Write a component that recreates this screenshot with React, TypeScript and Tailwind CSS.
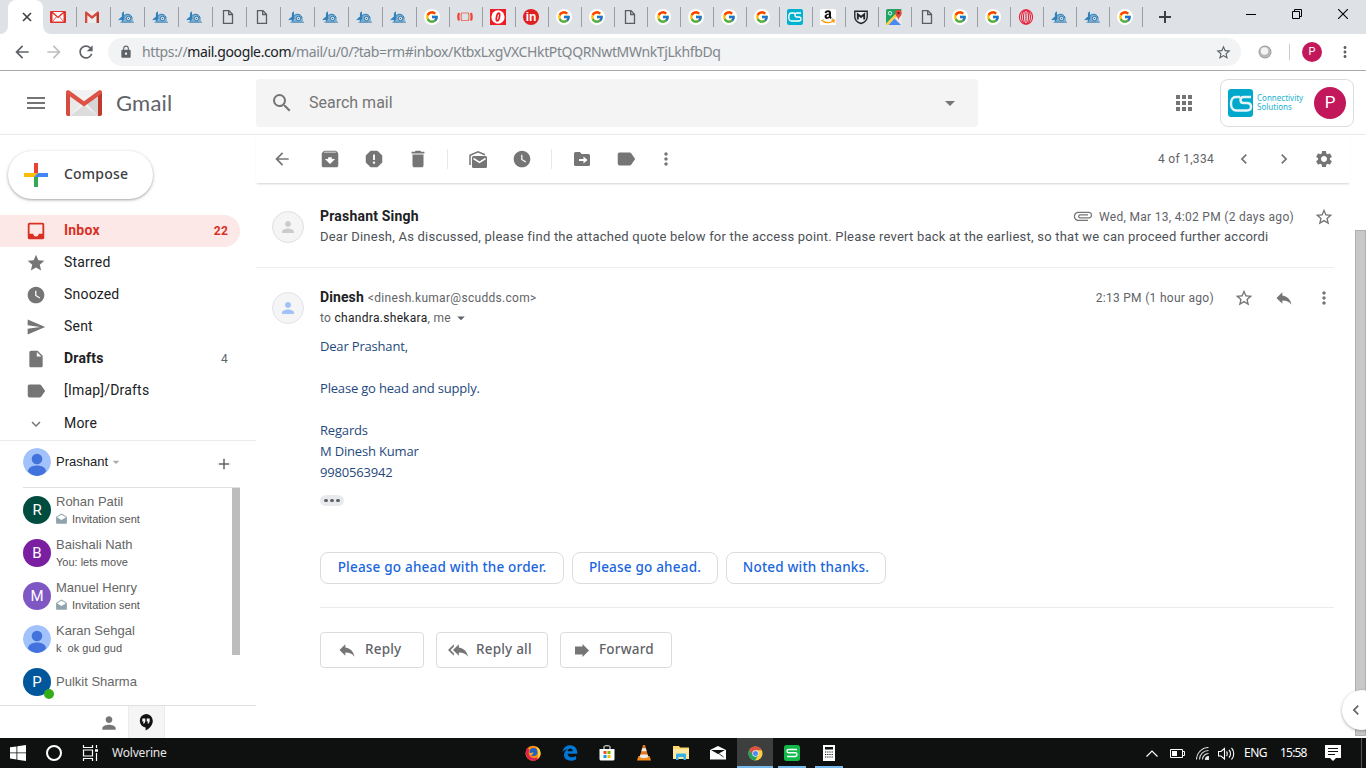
import type { ReactNode } from 'react';
import {
  MdAdd,
  MdApps,
  MdArchive,
  MdArrowBack,
  MdArrowDropDown,
  MdArrowForward,
  MdAttachFile,
  MdChevronLeft,
  MdChevronRight,
  MdDelete,
  MdDrafts,
  MdExpandMore,
  MdInbox,
  MdInsertDriveFile,
  MdLabel,
  MdLock,
  MdMenu,
  MdMoreVert,
  MdPerson,
  MdRefresh,
  MdReply,
  MdReplyAll,
  MdReport,
  MdSearch,
  MdSend,
  MdSettings,
  MdStar,
  MdStarBorder,
  MdWatchLater,
} from 'react-icons/md';
import { FcGoogle } from 'react-icons/fc';
import { FaAmazon } from 'react-icons/fa';

type TabKind =
  | 'gmailOld' | 'gmail' | 'dolphin' | 'file' | 'google' | 'frame' | 'opera'
  | 'in' | 'cs' | 'amazon' | 'shield' | 'maps' | 'rings';

const wideTabs: TabKind[] = [
  'gmailOld', 'gmail', 'dolphin', 'dolphin', 'dolphin', 'file', 'file',
  'dolphin', 'dolphin', 'dolphin', 'dolphin',
];

const narrowTabs: TabKind[] = [
  'google', 'frame', 'opera', 'in', 'google', 'google', 'file', 'google', 'google', 'google', 'google',
  'cs', 'amazon', 'shield', 'maps', 'file', 'google', 'google', 'rings', 'dolphin', 'dolphin', 'google',
];

function Favicon({ kind }: { kind: TabKind }) {
  switch (kind) {
    case 'gmailOld':
      return (
        <svg width="16" height="16" viewBox="0 0 16 16">
          <rect x="0" y="2" width="16" height="12" rx="1" fill="#e0322d" />
          <path d="M2.500 4.500v8h11v-8L8 9.200z" fill="#fff" />
          <path d="M3 3h10L8 7.400z" fill="#fff" />
          <path d="M2.500 12.500L6.300 8M13.500 12.500L9.700 8" stroke="#e0322d" strokeWidth="0.800" />
        </svg>
      );
    case 'gmail':
      return (
        <svg width="16" height="16" viewBox="0 0 16 16">
          <rect x="1" y="2" width="14" height="12" rx="1" fill="#ececec" />
          <path d="M1 3v11h2.300V6.300L8 10l4.700-3.700V14H15V3l-1.300-.7L8 6.900 2.300 2.300z" fill="#d54b3d" />
          <path d="M12.700 6.300V14H15V3.500z" fill="#b93a2c" />
        </svg>
      );
    case 'dolphin':
      return (
        <svg width="16" height="16" viewBox="0 0 16 16">
          <path d="M0.200 11.300C1.500 9.500 2.800 8.600 4 7.600L3.900 4 6 2.300 5.900 5.600 8 7 6.500 11l-2.200 2.200L3.500 10.800z" fill="#2f7fbb" />
          <path d="M6 6.200C9 3.700 13.600 5 14.300 9l.9 3.300-3.600 1.200H4.500L6.400 9z" fill="#7fb0d2" />
          <path d="M6.300 6.500C9.500 4 13.500 5.500 14.200 9.400" stroke="#2f7fbb" strokeWidth="1" fill="none" />
          <circle cx="10.500" cy="9.500" r="2.200" fill="#d6e6f0" stroke="#3577a8" strokeWidth="1" />
          <circle cx="10.500" cy="9.500" r="0.700" fill="#2d6e9e" />
          <path d="M2.500 13.200H16" stroke="#4a89b5" strokeWidth="1" />
        </svg>
      );
    case 'file':
      return (
        <svg width="16" height="16" viewBox="0 0 16 16" fill="none" stroke="#5a5d61" strokeWidth="1.300">
          <path d="M3.500 1.600h5.400l3.600 3.700v9.100h-9z" />
          <path d="M8.700 1.800v3.700h3.600" />
        </svg>
      );
    case 'google':
      return (
        <div className="flex h-4 w-4 items-center justify-center rounded-full bg-white">
          <FcGoogle size={14} className="shrink-0" />
        </div>
      );
    case 'frame':
      return (
        <svg width="16" height="16" viewBox="0 0 16 16" fill="none" stroke="#f0402f">
          <path d="M4 4h8M4 11.500h8" stroke="#f2705f" strokeWidth="0.900" />
          <path d="M4.500 4.300c-.5 2-.5 5 0 7M11.500 4.300c.5 2 .5 5 0 7" strokeWidth="0.800" />
          <path d="M2 4c-.7 2-.7 5.500 0 7.500M14 4c.7 2 .7 5.500 0 7.500" strokeWidth="2.200" />
        </svg>
      );
    case 'opera':
      return (
        <svg width="16" height="16" viewBox="0 0 16 16">
          <rect width="16" height="16" fill="#ee1c25" />
          <ellipse cx="8" cy="8" rx="6.600" ry="6.800" fill="#fff" />
          <ellipse cx="8" cy="8" rx="2.300" ry="4.800" fill="#ee1c25" transform="rotate(12 8 8)" />
          <path d="M8.500 5.600l-1 4.800" stroke="#fff" strokeWidth="1" />
        </svg>
      );
    case 'in':
      return (
        <div className="flex h-4 w-4 items-center justify-center rounded-full bg-[#e02020] pb-px font-['Liberation_Sans',sans-serif] text-[12px] leading-none font-bold text-white">
          in
        </div>
      );
    case 'cs':
      return (
        <svg width="16" height="16" viewBox="0 0 16 16">
          <rect width="16" height="16" rx="2" fill="#00b2cf" />
          <path d="M7.800 4H4.500Q1.800 4 1.800 8t2.700 4H12q2 0 2-2t-2-2h-2q-2 0-2-2t2-2h4" fill="none" stroke="#fff" strokeWidth="1.300" />
        </svg>
      );
    case 'amazon':
      return (
        <svg width="16" height="16" viewBox="0 0 16 16">
          <rect width="16" height="16" rx="2" fill="#fff" />
          <FaAmazon x={1.500} y={0.500} size={13} color="#111" />
          <path d="M0 10.500h16V16H0z" fill="#fff" />
          <path d="M1.500 11c3.500 3.400 8.500 3.400 11.800 1M11.600 11.400l2.700-.2-.6 2.500" fill="none" stroke="#ff9900" strokeWidth="1.300" />
        </svg>
      );
    case 'shield':
      return (
        <svg width="16" height="16" viewBox="0 0 16 16">
          <path d="M1.800 2.300h12.400v5.400c0 3.600-2.800 5.700-6.200 6.800-3.400-1.100-6.200-3.200-6.200-6.800z" fill="#e9ebee" stroke="#20262b" strokeWidth="1.400" />
          <path d="M4.800 10.500V5.300L8 8l3.200-2.700v5.200" fill="none" stroke="#20262b" strokeWidth="1.900" />
        </svg>
      );
    case 'maps':
      return (
        <svg width="16" height="16" viewBox="0 0 16 16">
          <rect width="16" height="16" rx="1.500" fill="#1fa463" />
          <path d="M0 16L16 1v15z" fill="#e9e9e9" />
          <path d="M0 14.500L13 1.500l2 2L2.500 16H0z" fill="#ffd04b" />
          <path d="M2.500 16L8.500 9.500 15 16z" fill="#4a89f3" />
          <circle cx="4" cy="4.300" r="1.700" fill="none" stroke="#fff" strokeWidth="0.900" />
          <path d="M12.500 11c-.5-3-3.200-4-3.200-7a3.200 3.200 0 016.400 0c0 3-2.700 4-3.200 7z" fill="#dd4b3e" />
          <circle cx="12.500" cy="4" r="1.200" fill="#7d1f16" />
        </svg>
      );
    case 'rings':
      return (
        <svg width="16" height="16" viewBox="0 0 16 16" fill="none" stroke="#e8203a" strokeWidth="1.100">
          <ellipse cx="8" cy="8" rx="6.600" ry="7.200" />
          <ellipse cx="8" cy="8" rx="4.500" ry="7" />
          <ellipse cx="8" cy="8" rx="2.500" ry="6.600" />
          <path d="M8 3v10" />
        </svg>
      );
  }
}

function TabStrip() {
  return (
    <div className="flex h-[34px] bg-[#dee1e6]">
      <div className="h-[34px] w-2 shrink-0 bg-white">
        <div className="h-full w-full rounded-br-lg bg-[#dee1e6]" />
      </div>
      <div className="flex h-[34px] w-[35px] shrink-0 items-center justify-center rounded-t-lg bg-white pl-0.5">
        <svg width="10" height="10" viewBox="0 0 10 10" stroke="#3c4043" strokeWidth="1.600">
          <path d="M1 1l8 8M9 1L1 9" />
        </svg>
      </div>
      <div className="flex h-[34px] w-[34px] shrink-0 bg-white">
        <div className="flex h-full w-full items-center rounded-bl-lg bg-[#dee1e6]">
          <div className="flex h-5 w-full items-center border-r border-[#9b9fa4] pl-[7px]">
            <Favicon kind={wideTabs[0]} />
          </div>
        </div>
      </div>
      {wideTabs.slice(1).map((kind, i) => (
        <div key={i} className="mt-[7px] flex h-5 w-[34px] shrink-0 items-center border-r border-[#9b9fa4] pl-[7px]">
          <Favicon kind={kind} />
        </div>
      ))}
      {narrowTabs.map((kind, i) => (
        <div key={i} className="mt-[7px] flex h-5 w-[33px] shrink-0 items-center border-r border-[#9b9fa4] pl-[7px]">
          <Favicon kind={kind} />
        </div>
      ))}
      <svg className="mt-[11px] ml-4" width="12" height="12" viewBox="0 0 12 12" stroke="#3c4043" strokeWidth="2">
        <path d="M6 0v12M0 6h12" />
      </svg>
      <div className="mt-[9px] ml-auto flex gap-9 pr-[18px]">
        <svg width="10" height="10" viewBox="0 0 10 10" stroke="#000">
          <path d="M0 5.500h10" />
        </svg>
        <svg width="10" height="10" viewBox="0 0 10 10" stroke="#000" fill="none">
          <path d="M.5 2.500h7v7h-7zM2.500 2.500v-2h7v7h-2" />
        </svg>
        <svg width="10" height="10" viewBox="0 0 10 10" stroke="#000" strokeWidth="1.100">
          <path d="M0 0l10 10M10 0L0 10" />
        </svg>
      </div>
    </div>
  );
}

function AddressBar() {
  return (
    <div className="flex h-[37px] items-center border-b border-[#a9a9a9] bg-white text-[#5f6368]">
      <div className="flex w-[108px] items-center gap-3 pl-3">
        <MdArrowBack size={20} />
        <MdArrowForward size={20} className="text-[#bdbfc1]" />
        <MdRefresh size={20} />
      </div>
      <div className="flex h-7 w-[1133px] items-center rounded-full bg-[#f1f3f4] pl-[11px]">
        <MdLock size={14} />
        <div className="ml-[9px] font-['Noto_Sans',sans-serif] text-[14px] leading-5 tracking-[-0.38px] whitespace-nowrap text-[#80868b]">
          https://<span className="text-[#202124]">mail.google.com</span>
          /mail/u/0/?tab=rm#inbox/KtbxLxgVXCHktPtQQRNwtMWnkTjLkhfbDq
        </div>
        <MdStarBorder size={17} className="mr-[9px] ml-auto" />
      </div>
      <svg width="14" height="14" viewBox="0 0 14 14" className="ml-[17px]">
        <circle cx="7" cy="7" r="6.500" fill="#9e9e9e" />
        <circle cx="7" cy="7" r="5.600" fill="#b9b9b9" />
        <circle cx="6.500" cy="6" r="3.800" fill="#f4f4f4" />
      </svg>
      <div className="ml-[17px] h-4 w-px bg-[#c8cacd]" />
      <div className="ml-3 flex h-5 w-5 items-center justify-center rounded-full bg-[#c2185b] font-['Roboto',sans-serif] text-[11px] text-white">
        P
      </div>
      <MdMoreVert size={18} className="ml-[14px]" />
    </div>
  );
}

function GmailLogo() {
  return (
    <svg width="36" height="26" viewBox="0 0 36 26">
      <rect x="1" width="34" height="26" rx="1.500" fill="#f2f2f2" />
      <path d="M4 26l14-11 14 11z" fill="#dcdcdc" />
      <path d="M4 4v22L16 13z" fill="#e9e9e9" />
      <path d="M20 13l12 13V5z" fill="#d5d5d5" />
      <path d="M0 2v22a2 2 0 002 2h2V4z" fill="#d54b3d" />
      <path d="M36 2v22a2 2 0 01-2 2h-2V4z" fill="#c0392b" />
      <path d="M0 2.200C0 .2 2.200-.3 3.500.7L18 11.300 32.500.7C33.800-.3 36 .2 36 2.200c0 1-.4 1.500-1 2L18 16.500 1 4.200c-.6-.5-1-1-1-2z" fill="#de5145" />
    </svg>
  );
}

function Header() {
  return (
    <header className="flex h-16 items-center border-b border-[#ebebeb] text-[#757575]">
      <div className="flex w-64 items-center pl-6">
        <MdMenu size={24} />
        <div className="ml-[18px]">
          <GmailLogo />
        </div>
        <span className="ml-[14px] font-['Lato',sans-serif] text-[22px] leading-7 tracking-[0.2px] text-[#5f6368]">Gmail</span>
      </div>
      <div className="flex h-12 w-[722px] items-center rounded bg-[#f4f4f4] pl-[14px]">
        <MdSearch size={24} />
        <span className="ml-[15px] pt-px font-['Roboto',sans-serif] text-[16px]">Search mail</span>
        <MdArrowDropDown size={24} className="mr-4 ml-auto" />
      </div>
      <MdApps size={24} className="ml-[194px]" />
      <div className="ml-6 flex h-12 w-[134px] items-center rounded-lg border border-[#dadce0] pl-[7px]">
        <svg width="25" height="28" viewBox="0 0 25 28">
          <rect width="25" height="28" rx="3" fill="#00a9cb" />
          <path d="M12 8H8Q3 8 3 14.500T8 21.500h11q4 0 4-3.700T19 14h-3.500q-3 0-3-3t3-3H23" fill="none" stroke="#e4f3f7" strokeWidth="2.400" />
        </svg>
        <div className="-mt-0.5 ml-1 w-[53px] font-['Noto_Sans',sans-serif] text-[8px] text-[#22b3d1]">
          <div className="leading-[9px]">Connectivity</div>
          <div className="leading-[9px]">Solutions</div>
        </div>
        <div className="ml-1 flex h-8 w-8 shrink-0 items-center justify-center rounded-full bg-[#c2185b] font-['Roboto',sans-serif] text-[17px] text-white">
          P
        </div>
      </div>
    </header>
  );
}

interface NavItem {
  label: string;
  icon: ReactNode;
  count?: string;
  bold?: boolean;
  active?: boolean;
}

const navItems: NavItem[] = [
  { label: 'Inbox', icon: <MdInbox size={22} />, count: '22', bold: true, active: true },
  { label: 'Starred', icon: <MdStar size={20} /> },
  { label: 'Snoozed', icon: <MdWatchLater size={20} /> },
  { label: 'Sent', icon: <MdSend size={20} /> },
  { label: 'Drafts', icon: <MdInsertDriveFile size={20} />, count: '4', bold: true },
  { label: '[Imap]/Drafts', icon: <MdLabel size={22} /> },
  { label: 'More', icon: <MdExpandMore size={18} /> },
];

interface Contact {
  name: string;
  status?: string;
  invited?: boolean;
  initial?: string;
  color?: string;
  online?: boolean;
}

const contacts: Contact[] = [
  { name: 'Rohan Patil', status: 'Invitation sent', invited: true, initial: 'R', color: 'bg-[#004d40]' },
  { name: 'Baishali Nath', status: 'You: lets move', initial: 'B', color: 'bg-[#7b1fa2]' },
  { name: 'Manuel Henry', status: 'Invitation sent', invited: true, initial: 'M', color: 'bg-[#7e57c2]' },
  { name: 'Karan Sehgal', status: 'k  ok gud gud' },
  { name: 'Pulkit Sharma', initial: 'P', color: 'bg-[#01579b]', online: true },
];

function BlankAvatar() {
  return (
    <svg width="28" height="28" viewBox="0 0 28 28" className="shrink-0 rounded-full">
      <circle cx="14" cy="14" r="14" fill="#a1c2fa" />
      <circle cx="14" cy="11" r="5.300" fill="#4272db" />
      <path d="M5 23.500c0-4 4.500-6 9-6s9 2 9 6c-2 2.700-5.500 4.500-9 4.500s-7-1.800-9-4.500z" fill="#4272db" />
    </svg>
  );
}

function Sidebar() {
  return (
    <aside className="flex w-64 shrink-0 flex-col pt-4 font-['Roboto',sans-serif]">
      <button className="ml-2 flex h-12 w-[145px] items-center rounded-full bg-white pl-4 shadow-[0_1px_2px_0_rgba(60,64,67,0.3),0_1px_3px_1px_rgba(60,64,67,0.15)]">
        <svg width="24" height="24" viewBox="0 0 24 24">
          <path d="M10 0h4v10l-4 4z" fill="#ea4335" />
          <path d="M0 10h10l4 0-4 4H0z" fill="#fbbc04" />
          <path d="M14 10h10v4H10z" fill="#4285f4" />
          <path d="M10 14h4v10h-4z" fill="#34a853" />
        </svg>
        <span className="ml-4 pb-[3px] font-['Noto_Sans',sans-serif] text-[14px] font-medium tracking-[0.2px] text-[#3c4043]">Compose</span>
      </button>
      <nav className="mt-4 h-[226px] border-b border-[#ebebeb]">
        {navItems.map((item) => (
          <div
            key={item.label}
            className={`flex h-8 w-60 items-center rounded-r-full pr-3 ${item.active ? 'bg-[#fce8e6] text-[#d93025]' : 'text-[#202124]'} ${item.label === 'More' ? 'pt-0.5' : ''}`}
          >
            <div className={`ml-6 flex w-6 justify-center ${item.active ? '' : 'text-[#757575]'}`}>{item.icon}</div>
            <span className={`ml-4 pb-0.5 text-[14px] tracking-[0.2px] ${item.bold ? 'font-bold' : ''}`}>{item.label}</span>
            {item.count && (
              <span className={`ml-auto text-[12px] tracking-[0.2px] ${item.active ? 'font-bold' : 'text-[#5f6368]'}`}>{item.count}</span>
            )}
          </div>
        ))}
      </nav>

      <div className="ml-[23px] flex h-[47px] w-[217px] border-b border-[#e0e0e0] pt-[7px] font-['Liberation_Sans',sans-serif]">
        <BlankAvatar />
        <span className="mt-1.5 ml-[5px] text-[13px] leading-4 text-[#202124]">Prashant</span>
        <MdArrowDropDown size={16} className="mt-1.5 text-[#aaa]" />
        <MdAdd size={18} className="mt-[7px] mr-[7px] ml-auto text-[#666]" />
      </div>
      <div className="ml-[23px] flex h-[217px] w-[217px] justify-between font-['Liberation_Sans',sans-serif]">
        <div className="pt-2">
          {contacts.map((c) => (
            <div key={c.name} className="relative flex h-[43px]">
              {c.initial ? (
                <div className={`flex h-7 w-7 shrink-0 items-center justify-center rounded-full font-['Roboto',sans-serif] text-[15px] text-white ${c.color}`}>
                  {c.initial}
                </div>
              ) : (
                <BlankAvatar />
              )}
              {c.online && <div className="absolute top-[21px] left-[21px] h-2.5 w-2.5 rounded-full bg-[#35ac19]" />}
              <div className={`ml-[5px] whitespace-pre ${c.status ? '-mt-[3px]' : 'mt-[5px]'}`}>
                <div className="text-[13px] leading-[18px] text-[#666]">{c.name}</div>
                {c.status && (
                  <div className="flex items-center text-[11px] leading-[17px] text-[#555]">
                    {c.invited && <MdDrafts size={13} className="mr-[4px] -ml-px text-[#90a4ae]" />}
                    {c.status}
                  </div>
                )}
              </div>
            </div>
          ))}
        </div>
        <div className="h-[167px] w-2 bg-[#bdbdbd]" />
      </div>
      <div className="flex h-[33px] border-t border-[#e0e0e0]">
        <div className="ml-[90px] flex w-[38px] items-center justify-center pt-0.5 text-[#757575]">
          <MdPerson size={20} />
        </div>
        <div className="flex w-[37px] items-center justify-center border-x border-[#ebebeb] bg-[#f5f5f5] pr-px">
          <svg width="14" height="17" viewBox="0 0 14 17">
            <path d="M7 0a6.800 6.800 0 00-.4 13.500V16.500C10 15 13.800 11.500 13.800 6.800A6.800 6.800 0 007 0z" fill="#111" />
            <path d="M3.300 4.500h3v3L5.300 9.500H4l.7-2H3.300zM7.700 4.500h3v3l-1 2H8.400l.7-2H7.700z" fill="#f5f5f5" />
          </svg>
        </div>
      </div>
    </aside>
  );
}

function MailStackIcon() {
  return (
    <svg width="18" height="17" viewBox="0 0 18 17">
      <path d="M1 14V4.200L9 .9l7 2.900" fill="none" stroke="#757575" strokeWidth="1.500" />
      <rect x="3" y="5" width="15" height="12" rx="1.500" fill="#757575" />
      <path d="M4.500 7.500l6 3.800 6-3.800" fill="none" stroke="#fff" strokeWidth="1.500" />
    </svg>
  );
}

function MoveIcon() {
  return (
    <svg width="16" height="14" viewBox="0 0 16 14">
      <path d="M1.500 0H6l1.500 2h7A1.500 1.500 0 0116 3.500v9a1.500 1.500 0 01-1.500 1.500h-13A1.500 1.500 0 010 12.500v-11A1.500 1.500 0 011.500 0z" fill="#757575" />
      <path d="M5 7h4.500V4.500L13.500 8l-4 3.500V9H5z" fill="#fff" />
    </svg>
  );
}

function Toolbar() {
  return (
    <div className="flex h-12 w-[1094px] items-center text-[#757575] shadow-[0_2px_2px_-1px_rgba(0,0,0,0.18)]">
      <div className="ml-4 flex w-5 justify-center"><MdArrowBack size={20} /></div>
      <div className="ml-4 flex w-11 justify-center"><MdArchive size={22} /></div>
      <div className="flex w-11 justify-center"><MdReport size={22} /></div>
      <div className="flex w-11 justify-center"><MdDelete size={22} /></div>
      <div className="ml-[7px] h-5 w-px bg-[#e8e8e8]" />
      <div className="ml-2 flex w-11 justify-center"><MailStackIcon /></div>
      <div className="flex w-11 justify-center"><MdWatchLater size={20} /></div>
      <div className="ml-[7px] h-5 w-px bg-[#e8e8e8]" />
      <div className="ml-2 flex w-11 justify-center"><MoveIcon /></div>
      <div className="flex w-11 justify-center"><MdLabel size={22} /></div>
      <div className="flex w-9 justify-center"><MdMoreVert size={20} /></div>
      <span className="mr-[10px] ml-auto text-[12px] tracking-[0.3px] text-[#5f6368]">4 of 1,334</span>
      <div className="flex w-10 justify-center"><MdChevronLeft size={20} /></div>
      <div className="flex w-10 justify-center"><MdChevronRight size={20} /></div>
      <div className="mr-1.5 flex w-10 justify-center"><MdSettings size={20} /></div>
    </div>
  );
}

const bodyLines = ['Dear Prashant,', '', 'Please go head and supply.', '', 'Regards', 'M Dinesh Kumar', '9980563942'];

function MailView() {
  return (
    <main className="flex flex-1 flex-col font-['Roboto',sans-serif]">
      <Toolbar />
      <section className="mr-[21px] flex h-[85px] border-b border-[#eceff1] pt-7 pl-4">
        <div className="flex h-8 w-8 items-center justify-center rounded-full border border-[#e0e0e0] bg-[#f5f5f5] text-[#ccc]">
          <MdPerson size={18} />
        </div>
        <div className="-mt-1 ml-4 flex-1">
          <div className="flex h-5 items-center">
            <span className="pb-0.5 text-[14px] font-bold tracking-[0.2px] text-[#202124]">Prashant Singh</span>
            <MdAttachFile size={20} className="mr-1.5 mb-0.5 ml-auto rotate-90 text-[#757575]" />
            <span className="mr-[10px] text-[12px] tracking-[0.3px] text-[#5f6368]">Wed, Mar 13, 4:02 PM (2 days ago)</span>
            <MdStarBorder size={20} className="ml-[10px] text-[#757575]" />
          </div>
          <div className="text-[13px] leading-5 tracking-[0.222px] whitespace-nowrap text-[#4d5156]">
            Dear Dinesh, As discussed, please find the attached quote below for the access point. Please revert back at the earliest, so that we can proceed further accordi
          </div>
        </div>
      </section>

      <section className="mr-[21px] flex pt-6 pl-4">
        <div className="flex h-8 w-8 items-center justify-center rounded-full border border-[#dfe3ec] bg-[#f5f5f5] text-[#a1c2fa]">
          <MdPerson size={18} />
        </div>
        <div className="-mt-1 ml-4 flex-1">
          <div className="flex h-5 items-center">
            <span className="pb-0.5 text-[14px] font-bold tracking-[0.1px] text-[#202124]">Dinesh</span>
            <span className="ml-1 text-[12px] tracking-[0.3px] text-[#5f6368]">&lt;dinesh.kumar@scudds.com&gt;</span>
            <span className="mr-[20px] ml-auto text-[12px] tracking-[0.3px] text-[#5f6368]">2:13 PM (1 hour ago)</span>
            <MdStarBorder size={20} className="mr-5 text-[#757575]" />
            <MdReply size={20} className="mr-5 text-[#757575]" />
            <MdMoreVert size={20} className="text-[#757575]" />
          </div>
          <div className="flex h-5 items-center text-[12px] tracking-[0.3px] text-[#5f6368]">
            to&nbsp;<span className="text-[#202124]">chandra.shekara</span>, me
            <MdArrowDropDown size={18} className="ml-px" />
          </div>
          <div className="mt-2 font-['Open_Sans',sans-serif] text-[13px] tracking-[-0.18px] text-[#1f497d]">
            {bodyLines.map((line, i) => (
              <div key={i} className="h-[21px] leading-[21px]">{line}</div>
            ))}
          </div>
          <div className="mt-3 flex h-[11px] w-6 items-center justify-center gap-[2.500px] rounded-full bg-[#e8eaed]">
            <div className="h-[3.500px] w-[3.500px] rounded-full bg-[#5f6368]" />
            <div className="h-[3.500px] w-[3.500px] rounded-full bg-[#5f6368]" />
            <div className="h-[3.500px] w-[3.500px] rounded-full bg-[#5f6368]" />
          </div>
        </div>
      </section>

      <div className="mr-[21px] ml-16 h-[102px] border-b border-[#ebebeb] pt-[46px]">
        <div className="flex gap-2 font-['Noto_Sans',sans-serif] text-[13.5px] font-medium text-[#1a66dc]">
          <button className="h-8 w-[244px] rounded-lg border border-[#dadce0] pb-0.5 tracking-[0.2px]">Please go ahead with the order.</button>
          <button className="h-8 w-[146px] rounded-lg border border-[#dadce0] pb-0.5 tracking-[0.2px]">Please go ahead.</button>
          <button className="h-8 w-[160px] rounded-lg border border-[#dadce0] pb-0.5 tracking-[0.2px]">Noted with thanks.</button>
        </div>
      </div>
      <div className="mt-6 ml-16 flex gap-3 font-['Noto_Sans',sans-serif] text-[13.5px] font-medium tracking-[0.2px] text-[#5f6368]">
        <button className="flex h-9 w-[104px] items-center rounded border border-[#dadce0] pl-4">
          <MdReply size={20} className="text-[#757575]" />
          <span className="ml-2 pb-0.5">Reply</span>
        </button>
        <button className="flex h-9 w-28 items-center rounded border border-[#dadce0] pl-[11px]">
          <MdReplyAll size={20} className="text-[#757575]" />
          <span className="ml-2 pb-0.5 whitespace-nowrap">Reply all</span>
        </button>
        <button className="flex h-9 w-28 items-center rounded border border-[#dadce0] pl-[14px]">
          <svg width="14" height="13" viewBox="0 0 14 13" fill="#757575">
            <path d="M0 2.500h7.500V0L14 6.500 7.500 13v-2.500H0z" />
          </svg>
          <span className="ml-[10px] pb-0.5">Forward</span>
        </button>
      </div>
    </main>
  );
}

function TaskApp({ children, state }: { children: ReactNode; state?: 'active' | 'running' }) {
  return (
    <div className={`flex h-[30px] w-[37px] flex-col items-center ${state === 'active' ? 'bg-[#3c3f3e]' : ''}`}>
      <div className="flex h-7 items-center pt-0.5">{children}</div>
      {state && <div className={`h-0.5 bg-[#76b9ed] ${state === 'active' ? 'w-full' : 'w-7'}`} />}
    </div>
  );
}

function Taskbar() {
  return (
    <footer className="flex h-[30px] items-center bg-[#0f1110] font-['Noto_Sans',sans-serif] text-[12px] text-white">
      <svg className="ml-[10px]" width="16" height="16" viewBox="0 0 16 16" fill="#fff">
        <path d="M0 2.300l6.500-.9v6.100H0zM7.300 1.300L16 0v7.500H7.300zM0 8.300h6.500v6.200L0 13.600zM7.300 8.300H16V16l-8.700-1.300z" />
      </svg>
      <div className="ml-5 h-4 w-4 rounded-full border-2 border-white" />
      <svg className="ml-5" width="17" height="16" viewBox="0 0 17 16" fill="none" stroke="#fff">
        <path d="M1.500 0v2.500h9V0M1.500 16v-2.500h9V16M1.500 5h9v6h-9zM14.500 0v3M14.500 8v8" strokeWidth="1.200" />
        <path d="M13 5.500h3" strokeWidth="2.500" />
      </svg>
      <span className="ml-[13px] w-[102px] tracking-[-0.2px] text-[#e6e6e6]">Wolverine</span>

      <div className="ml-[300px] flex">
        <TaskApp>
          <svg width="16" height="16" viewBox="0 0 16 16">
            <circle cx="8" cy="8.300" r="7.500" fill="#ff8a16" />
            <path d="M.8 6C.3 12 4 15.800 8.500 15.800c4 0 7-3 7.200-7-2 4.200-6 5.200-9 3.700C3.500 11 3 7 4.500 5L2 2.500z" fill="#e31f4f" />
            <path d="M11 1.500c3.500 1.500 5 4.500 4.500 8-.5 2.500-2 4-3.500 4.500 2-3 1.500-8-1-12.500z" fill="#ffd93b" />
            <circle cx="8.500" cy="7" r="3.900" fill="#1b62c4" />
            <path d="M4.500 8c2 .3 3-.8 4.500-.5-1.200.5-1 2-2.500 2.500-1 .2-2-.7-2-2z" fill="#ffb21c" />
          </svg>
        </TaskApp>
        <TaskApp>
          <svg width="16" height="16" viewBox="0 0 16 16">
            <path d="M.5 7C1.300 2.500 4.200.2 8 .2c4.600 0 7.500 3 7.300 8.600H5.600c.2 4 5 4.400 8.500 2.200v3.400C9 17.200 1.500 15.500 2 9.500 2.200 7 4 5.200 6 4.300 4 4.300 1.800 5.300.5 7zm5.200-.8h5c0-3.600-4.800-3.300-5 0z" fill="#0078d7" />
          </svg>
        </TaskApp>
        <TaskApp>
          <svg width="16" height="16" viewBox="0 0 16 16">
            <path d="M5 4V1.500C5 .5 11 .5 11 1.500V4" fill="none" stroke="#fff" />
            <path d="M.5 4h15v10a1.500 1.500 0 01-1.500 1.500H2A1.500 1.500 0 01.5 14z" fill="#fff" />
            <path d="M4.500 6h3v3h-3z" fill="#f25022" />
            <path d="M8.500 6h3v3h-3z" fill="#7fba00" />
            <path d="M4.500 10h3v3h-3z" fill="#00a4ef" />
            <path d="M8.500 10h3v3h-3z" fill="#ffb900" />
          </svg>
        </TaskApp>
        <TaskApp>
          <svg width="14" height="16" viewBox="0 0 14 16">
            <path d="M1.500 11h11L14 15.500H0z" fill="#f48b1a" />
            <path d="M6 0h2l3.500 12.500h-9z" fill="#e2761b" />
            <path d="M5.200 3.200h3.600l.8 3H4.400zM3.500 9.500h7l.8 2.500c-2 1.300-6.600 1.300-8.600 0z" fill="#ececec" />
          </svg>
        </TaskApp>
        <TaskApp>
          <svg width="16" height="14" viewBox="0 0 16 14">
            <path d="M0 0h6l1 1.500h9V13H0z" fill="#ffd767" />
            <path d="M0 3h16v10H0z" fill="#ffe9a2" />
            <path d="M3 14V8.500Q3 7.500 4 7.500h8q1 0 1 1V14h-2.500v-3h-5v3z" fill="#38b1e7" />
          </svg>
        </TaskApp>
        <TaskApp>
          <svg width="16" height="14" viewBox="0 0 16 14">
            <path d="M0 4l8-4 8 4v9.500H0z" fill="#fff" />
            <path d="M1 4h14L8 8z" fill="#0f1110" />
            <path d="M8 7l5.500 4" stroke="#0f1110" strokeWidth="0.800" />
          </svg>
        </TaskApp>
        <div className="ml-px w-9 overflow-hidden">
          <TaskApp state="active">
            <svg width="15" height="15" viewBox="0 0 16 16">
              <circle cx="8" cy="8" r="7.500" fill="#ffcd40" />
              <path d="M1.500 4.200A7.500 7.500 0 0114.500 4.500H8L4.700 10z" fill="#dd5144" />
              <path d="M1.500 4.300A7.500 7.500 0 007.300 15.500L10.800 10 5 9.500z" fill="#1da362" />
              <circle cx="8" cy="8" r="3.400" fill="#f1f1f1" />
              <circle cx="8" cy="8" r="2.700" fill="#4c8bf5" />
            </svg>
          </TaskApp>
        </div>
        <TaskApp state="running">
          <svg width="16" height="16" viewBox="0 0 16 16">
            <rect width="16" height="16" rx="2.500" fill="#12b84a" />
            <path d="M13 4.500H4.500Q3 4.500 3 6t1.500 1.700h7Q13 8 13 9.500T11.500 11.500H3" fill="none" stroke="#fff" strokeWidth="1.400" />
          </svg>
        </TaskApp>
        <TaskApp state="running">
          <svg width="12" height="16" viewBox="0 0 12 16">
            <rect width="12" height="16" fill="#fff" />
            <path d="M2 2h8v2.500H2z" fill="#111" />
            <path d="M2 7h8M2 9.500h8M2 12h8" stroke="#111" strokeWidth="1.200" strokeDasharray="1.200 1" />
          </svg>
        </TaskApp>
      </div>

      <div className="ml-auto flex items-center">
        <svg width="12" height="7" viewBox="0 0 12 7" fill="none" stroke="#fff" strokeWidth="1.200">
          <path d="M.5 6.500L6 1l5.500 5.500" />
        </svg>
        <svg className="ml-[12px]" width="15" height="9" viewBox="0 0 15 9">
          <path d="M.5.500h12v8H.5zM13 2.500h1.500v4H13" fill="none" stroke="#fff" />
          <path d="M2 2h5v5H2z" fill="#fff" />
        </svg>
        <svg className="ml-[11px]" width="13" height="13" viewBox="0 0 13 13" fill="none" stroke="#ddd" strokeWidth="1.100">
          <path d="M.5 12.500C.5 6 6 .5 12.500.5M3.500 12.500c0-5 4-9 9-9M6.500 12.500c0-3.300 2.700-6 6-6" />
          <path d="M9.500 12.500c0-1.700 1.300-3 3-3v3z" fill="#fff" />
        </svg>
        <svg className="ml-[9px]" width="17" height="13" viewBox="0 0 17 13" fill="none" stroke="#fff" strokeWidth="1.100">
          <path d="M.5 4.500H3l3.500-3v10.500L3 9H.5zM8.500 4.500c1 1 1 3.500 0 4.500M11 3c2 2 2 5.500 0 7.500M13.500 1c3 3 3 8.500 0 11.500" />
        </svg>
        <span className="ml-[9px] w-9 tracking-[-0.5px]">ENG</span>
        <span className="w-[45px] tracking-[-0.8px]">15:58</span>
        <svg width="16" height="16" viewBox="0 0 16 16">
          <path d="M0 0h16v13h-5l-3 3-3-3H0z" fill="#fff" />
          <path d="M3 3.500h10M3 6.500h10M3 9.500h7" stroke="#111" />
        </svg>
        <div className="ml-5 h-[30px] w-[5px] border-l border-[#555]" />
      </div>
    </footer>
  );
}

export default function App() {
  return (
    <div className="relative flex h-[768px] w-[1366px] flex-col overflow-hidden bg-white">
      <TabStrip />
      <AddressBar />
      <Header />
      <div className="flex h-[603px]">
        <Sidebar />
        <MailView />
        <div className="mt-[95px] h-[506px] w-[11px] shrink-0 border border-[#b0b0b0] bg-[#c8c8c8]" />
      </div>
      {/* side panel handle, sits over the scrollbar */}
      <div className="absolute top-[690px] left-[1342px] flex h-10 w-10 items-center rounded-full bg-white pl-1 text-[#5f6368] shadow-[0_1px_3px_rgba(60,64,67,0.45)]">
        <MdChevronLeft size={20} />
      </div>
      <Taskbar />
    </div>
  );
}
